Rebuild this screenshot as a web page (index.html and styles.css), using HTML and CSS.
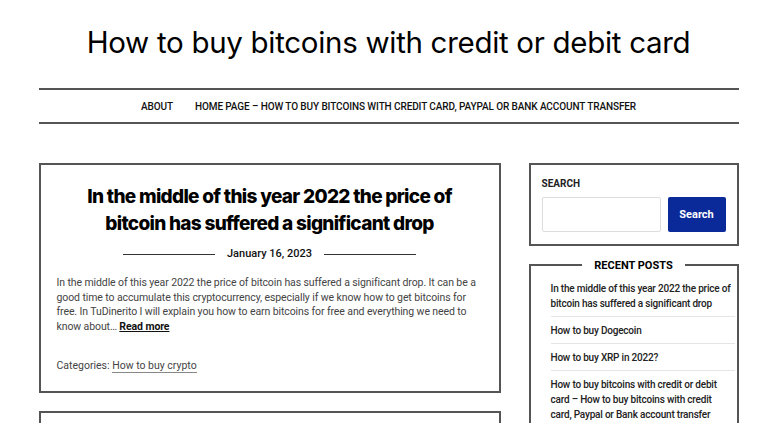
FILE: index.html
```html
<!DOCTYPE html>
<html lang="en">
<head>
    <meta charset="UTF-8">
    <meta name="viewport" content="width=device-width, initial-scale=1.0">
    <title>How to buy bitcoins with credit or debit card</title>
    <link rel="stylesheet" href="styles.css">
</head>
<body>
    <header class="site-header">
        <h1 class="site-title">How to buy bitcoins with credit or debit card</h1>
    </header>

    <nav class="main-nav">
        <a href="#">About</a>
        <a href="#">Home Page &ndash; How to buy bitcoins with credit card, Paypal or Bank account transfer</a>
    </nav>

    <div class="content">
        <main class="posts">
            <article class="post">
                <h2 class="post-title">In the middle of this year 2022 the price of bitcoin has suffered a significant drop</h2>
                <div class="post-date"><span>January 16, 2023</span></div>
                <p class="post-excerpt">In the middle of this year 2022 the price of bitcoin has suffered a significant drop. It can be a good time to accumulate this cryptocurrency, especially if we know how to get bitcoins for free. In TuDinerito I will explain you how to earn bitcoins for free and everything we need to know about&hellip; <a href="#" class="read-more">Read more</a></p>
                <p class="post-cats">Categories: <a href="#">How to buy crypto</a></p>
            </article>
            <article class="post">
                <h2 class="post-title">How to buy Dogecoin</h2>
            </article>
        </main>

        <aside class="sidebar">
            <section class="widget search-widget">
                <label for="s" class="widget-label">Search</label>
                <div class="search-row">
                    <input type="text" id="s">
                    <button>Search</button>
                </div>
            </section>

            <section class="widget recent-widget">
                <h3 class="widget-title">Recent Posts</h3>
                <ul class="recent-list">
                    <li><a href="#">In the middle of this year 2022 the price of bitcoin has suffered a significant drop</a></li>
                    <li><a href="#">How to buy Dogecoin</a></li>
                    <li><a href="#">How to buy XRP in 2022?</a></li>
                    <li><a href="#">How to buy bitcoins with credit or debit card &ndash; How to buy bitcoins with credit card, Paypal or Bank account transfer</a></li>
                </ul>
            </section>
        </aside>
    </div>
</body>
</html>
```

FILE: styles.css
```css
body {
    margin: 0;
    font-family: Roboto, "Noto Sans", sans-serif;
    color: #222;
    background: #fff;
}
a {
    color: inherit;
    text-decoration: none;
}
.site-header {
    padding: 22px 0 26px;
    text-align: center;
}
.site-title {
    margin: 0;
    font-family: Inter, Roboto, sans-serif;
    font-size: 29.5px;
    font-weight: 400;
    line-height: 40px;
    color: #000;
    letter-spacing: -0.3px;
}
.main-nav {
    width: 700px;
    margin: 0 auto;
    border-top: 2px solid #555;
    border-bottom: 2px solid #555;
    height: 32px;
    display: flex;
    justify-content: center;
    align-items: center;
    gap: 22px;
    font-size: 10px;
    font-weight: 500;
    letter-spacing: -0.1px;
    text-transform: uppercase;
    color: #111;
}
.content {
    width: 700px;
    margin: 39px auto 0;
    display: grid;
    grid-template-columns: 462px 210px;
    gap: 28px;
    align-items: start;
}
.post {
    border: 2px solid #555;
    padding: 18px 16px;
    margin-bottom: 18px;
}
.post-title {
    margin: 0;
    text-align: center;
    font-family: Inter, Roboto, sans-serif;
    font-size: 19px;
    line-height: 27px;
    font-weight: 800;
    letter-spacing: -0.7px;
    color: #000;
    padding: 0 8px;
}
.post-date {
    margin-top: 9px;
    display: flex;
    justify-content: center;
    align-items: center;
    gap: 12px;
    font-size: 11px;
    font-weight: 500;
    line-height: 16px;
    color: #111;
}
.post-date::before,
.post-date::after {
    content: "";
    width: 92px;
    border-top: 1px solid #333;
}
.post-excerpt {
    margin: 14px 0 0;
    font-size: 10.5px;
    line-height: 14.5px;
    letter-spacing: -0.1px;
    color: #444;
}
.read-more {
    font-weight: 700;
    color: #111;
    text-decoration: underline;
}
.post-cats {
    margin: 25px 0 0;
    font-size: 10.5px;
    line-height: 14px;
    color: #444;
}
.post-cats a {
    border-bottom: 1px solid #888;
}
.widget {
    border: 2px solid #555;
    margin-bottom: 18px;
}
.search-widget {
    padding: 11px 11px 12px;
}
.widget-label {
    display: block;
    font-size: 10px;
    font-weight: 700;
    text-transform: uppercase;
    line-height: 16px;
    margin-bottom: 5px;
}
.search-row {
    display: flex;
    gap: 7px;
}
.search-row input {
    flex: 1;
    min-width: 0;
    height: 35px;
    box-sizing: border-box;
    border: 1px solid #ddd;
    border-radius: 2px;
}
.search-row button {
    width: 58px;
    height: 35px;
    border: none;
    border-radius: 2px;
    background: #0b2a99;
    color: #fff;
    font-family: inherit;
    font-size: 11px;
    font-weight: 700;
}
.recent-widget {
    padding: 0 2px 0 20px;
}
.widget-title {
    display: table;
    margin: -7px auto 0;
    padding: 0 12px;
    background: #fff;
    font-size: 11px;
    line-height: 14px;
    font-weight: 700;
    text-transform: uppercase;
    color: #000;
    position: relative;
    left: -9px;
}
.recent-list {
    list-style: none;
    margin: 0;
    padding: 2px 0 0;
}
.recent-list li {
    padding: 6px 0 5px;
    border-bottom: 1px solid #e5e5e5;
    font-size: 10px;
    line-height: 15px;
    letter-spacing: -0.2px;
    font-weight: 500;
}
```
